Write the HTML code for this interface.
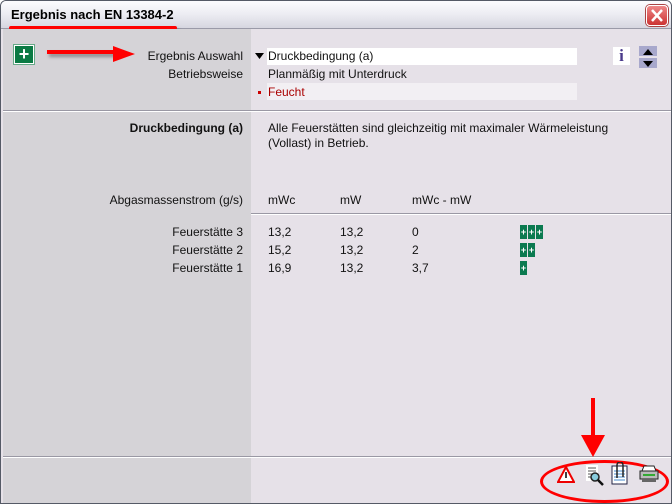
<!DOCTYPE html>
<html><head><meta charset="utf-8"><style>
*{margin:0;padding:0;box-sizing:border-box}
body{width:672px;height:504px;overflow:hidden;font-family:"Liberation Sans",sans-serif;font-size:12px;color:#111;background:#fff;position:relative}
.abs{position:absolute;white-space:nowrap}
.win{position:absolute;left:0;top:0;width:672px;height:504px;border:1px solid #555a66;border-radius:6px 6px 0 0;background:#e6e1e8;overflow:hidden}
.title{position:absolute;left:0;top:0;width:670px;height:28px;background:linear-gradient(#fcfcfe,#ececf2 50%,#d6d6e0);border-bottom:1px solid #9a9aa8}
.left{position:absolute;left:2px;top:28px;width:248px;height:474px;background:#d5d3d7}
.r{text-align:right;width:240px;left:2px}
.b{position:absolute;width:7px;height:14px;background:#0b7a50;color:#fff;font-size:9px;font-weight:bold;line-height:14px;text-align:center}
</style></head><body>
<div class="win">
<div class="title"></div>
<div class="abs" style="left:10px;top:6px;font-weight:bold;font-size:13px;color:#000">Ergebnis nach EN 13384-2</div>
<div class="abs" style="left:8px;top:25px;width:168px;height:4px;background:#f00;border-radius:2px;box-shadow:2px 3px 3px rgba(0,0,0,.35)"></div>
<div class="abs" style="left:645px;top:4px;width:22px;height:21px;border-radius:4px;background:linear-gradient(#e88,#c33);border:1px solid #fff;box-shadow:0 0 0 1px #a44"><svg width="20" height="19"><path d="M5 4L15 15M15 4L5 15" stroke="#fff" stroke-width="2.5"/></svg></div>
<div class="left"></div>
<div class="abs" style="left:2px;top:109px;width:668px;height:2px;border-top:1px solid #9a98a4;border-bottom:1px solid #fff"></div>
<div class="abs" style="left:250px;top:212px;width:420px;height:2px;border-top:1px solid #9a98a4;border-bottom:1px solid #fff"></div>
<div class="abs" style="left:2px;top:455px;width:668px;height:2px;border-top:1px solid #9a98a4;border-bottom:1px solid #fff"></div>

<div class="abs" style="left:13px;top:44px;width:20px;height:19px;background:#0b7a44;border:1px solid #fff;box-shadow:0 0 0 1px #6a8;color:#fff;font-weight:bold;font-size:18px;line-height:17px;text-align:center">+</div>
<div class="abs" style="left:46px;top:49px;width:72px;height:4px;background:#f00;box-shadow:2px 3px 3px rgba(0,0,0,.35)"></div>
<svg class="abs" style="left:112px;top:43px" width="24" height="20"><path d="M0 2L22 10L0 18Z" fill="#f00"/></svg>

<div class="abs r" style="top:48px">Ergebnis Auswahl</div>
<div class="abs r" style="top:66px">Betriebsweise</div>
<div class="abs" style="left:266px;top:47px;width:310px;height:17px;background:#fff"></div>
<div class="abs" style="left:266px;top:82px;width:310px;height:17px;background:#f2eff3"></div>
<svg class="abs" style="left:254px;top:52px" width="10" height="8"><path d="M0 0H9L4.5 6Z" fill="#000"/></svg>
<div class="abs" style="left:267px;top:48px">Druckbedingung (a)</div>
<div class="abs" style="left:267px;top:66px">Planmäßig mit Unterdruck</div>
<div class="abs" style="left:257px;top:90px;width:3px;height:3px;background:#c00"></div>
<div class="abs" style="left:267px;top:84px;color:#a00">Feucht</div>

<div class="abs" style="left:612px;top:46px;width:17px;height:18px;background:#fff;color:#4a3a8a;font-family:'Liberation Serif',serif;font-weight:bold;font-size:17px;line-height:18px;text-align:center">i</div>
<div class="abs" style="left:638px;top:45px;width:18px;height:10px;background:#a8a8cc"><svg width="18" height="10"><path d="M4 8H14L9 2Z" fill="#000"/></svg></div>
<div class="abs" style="left:638px;top:57px;width:18px;height:10px;background:#a8a8cc"><svg width="18" height="10"><path d="M4 2H14L9 8Z" fill="#000"/></svg></div>

<div class="abs r" style="top:120px;font-weight:bold">Druckbedingung (a)</div>
<div class="abs" style="left:267px;top:120px;line-height:15px">Alle Feuerstätten sind gleichzeitig mit maximaler Wärmeleistung<br>(Vollast) in Betrieb.</div>

<div class="abs r" style="top:192px">Abgasmassenstrom (g/s)</div>
<div class="abs" style="left:267px;top:192px">mWc</div>
<div class="abs" style="left:339px;top:192px">mW</div>
<div class="abs" style="left:411px;top:192px">mWc - mW</div>

<div class="abs r" style="top:224px">Feuerstätte 3</div>
<div class="abs r" style="top:242px">Feuerstätte 2</div>
<div class="abs r" style="top:260px">Feuerstätte 1</div>
<div class="abs" style="left:267px;top:224px">13,2</div><div class="abs" style="left:267px;top:242px">15,2</div><div class="abs" style="left:267px;top:260px">16,9</div>
<div class="abs" style="left:339px;top:224px">13,2</div><div class="abs" style="left:339px;top:242px">13,2</div><div class="abs" style="left:339px;top:260px">13,2</div>
<div class="abs" style="left:411px;top:224px">0</div><div class="abs" style="left:411px;top:242px">2</div><div class="abs" style="left:411px;top:260px">3,7</div>
<div class="b" style="left:519px;top:224px">+</div><div class="b" style="left:527px;top:224px">+</div><div class="b" style="left:535px;top:224px">+</div>
<div class="b" style="left:519px;top:242px">+</div><div class="b" style="left:527px;top:242px">+</div>
<div class="b" style="left:519px;top:260px">+</div>

<div class="abs" style="left:590px;top:397px;width:4px;height:42px;background:#f00"></div>
<svg class="abs" style="left:580px;top:434px" width="26" height="24"><path d="M0 0H24L12 22Z" fill="#f00"/></svg>
<div class="abs" style="left:539px;top:459px;width:129px;height:43px;border:3px solid #f00;border-radius:50%"></div>
<svg class="abs" style="left:556px;top:465px" width="18" height="17"><path d="M9 1L17 16H1Z" fill="#fff" stroke="#e00" stroke-width="2"/><path d="M9 6V12" stroke="#000" stroke-width="1.5"/></svg>
<svg class="abs" style="left:584px;top:463px" width="20" height="22"><rect x="1" y="1" width="12" height="16" fill="#fff"/><path d="M3 4H11M3 7H11M3 10H11M3 13H9" stroke="#555"/><circle cx="10" cy="13" r="4" fill="#8cd" stroke="#222" stroke-width="1.5"/><path d="M13 16L18 21" stroke="#111" stroke-width="2.5"/></svg>
<svg class="abs" style="left:610px;top:461px" width="18" height="24"><rect x="1" y="4" width="15" height="18" fill="#fff" stroke="#224"/><path d="M3 9H14M3 12H14M3 15H14M3 18H14" stroke="#48c"/><path d="M6 16V3a3 3 0 0 1 6 0V15" fill="none" stroke="#222" stroke-width="1.5"/></svg>
<svg class="abs" style="left:638px;top:464px" width="20" height="18"><path d="M5 1H15L17 6H3Z" fill="#fff" stroke="#222"/><rect x="1" y="6" width="18" height="8" fill="#bbb" stroke="#222"/><rect x="4" y="9" width="12" height="2" fill="#3a3"/><rect x="3" y="14" width="14" height="3" fill="#666"/></svg>
</div>
</body></html>
